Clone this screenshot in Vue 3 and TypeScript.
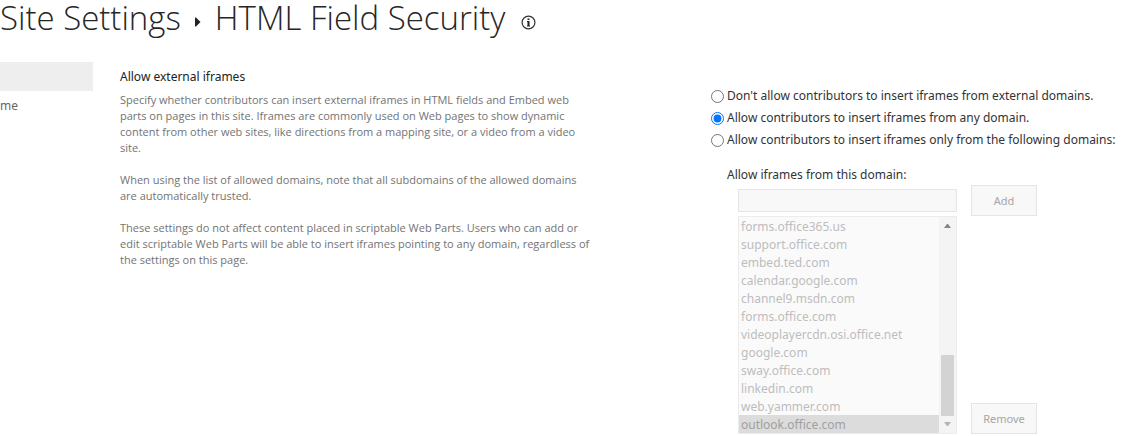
<script setup lang="ts">
import { ref } from 'vue'

type Policy = 'none' | 'any' | 'listed'

const choices: { value: Policy; label: string }[] = [
  { value: 'none', label: "Don't allow contributors to insert iframes from external domains." },
  { value: 'any', label: 'Allow contributors to insert iframes from any domain.' },
  { value: 'listed', label: 'Allow contributors to insert iframes only from the following domains:' },
]

const paragraphs: string[][] = [
  [
    'Specify whether contributors can insert external iframes in HTML fields and Embed web',
    'parts on pages in this site. Iframes are commonly used on Web pages to show dynamic',
    'content from other web sites, like directions from a mapping site, or a video from a video',
    'site.',
  ],
  [
    'When using the list of allowed domains, note that all subdomains of the allowed domains',
    'are automatically trusted.',
  ],
  [
    'These settings do not affect content placed in scriptable Web Parts. Users who can add or',
    'edit scriptable Web Parts will be able to insert iframes pointing to any domain, regardless of',
    'the settings on this page.',
  ],
]

const domains: string[] = [
  'forms.office365.us',
  'support.office.com',
  'embed.ted.com',
  'calendar.google.com',
  'channel9.msdn.com',
  'forms.office.com',
  'videoplayercdn.osi.office.net',
  'google.com',
  'sway.office.com',
  'linkedin.com',
  'web.yammer.com',
  'outlook.office.com',
]

const policy = ref<Policy>('any')
const newDomain = ref('')
const selected = ref('outlook.office.com')
</script>

<template>
  <div class="page">
    <header class="title">
      <h1>Site Settings</h1>
      <svg class="crumb" width="6" height="10" viewBox="0 0 6 10" aria-hidden="true">
        <path d="M0 .5h1L5.5 5 1 9.5H0z" fill="#222" />
      </svg>
      <h1>HTML Field Security</h1>
      <svg class="info" width="15" height="15" viewBox="0 0 15 15" aria-hidden="true">
        <circle cx="7.5" cy="7.5" r="6.4" fill="none" stroke="#333" stroke-width="1.2" />
        <path d="M6.5 3.5h2v1.5h-2zM6 6h2.5v4.5H9v1H6v-1h.5V7H6z" fill="#222" />
      </svg>
    </header>

    <div class="body">
      <nav class="side">
        <div class="current"></div>
        <a href="#">me</a>
      </nav>

      <section class="about">
        <h2>Allow external iframes</h2>
        <p v-for="(lines, i) in paragraphs" :key="i">
          <span v-for="line in lines" :key="line">{{ line }}</span>
        </p>
      </section>

      <form class="settings" @submit.prevent>
        <label v-for="c in choices" :key="c.value" class="choice">
          <input v-model="policy" type="radio" name="policy" :value="c.value" />
          <span>{{ c.label }}</span>
        </label>

        <label class="caption" for="domain">Allow iframes from this domain:</label>
        <div class="editor">
          <div class="fields">
            <input id="domain" v-model="newDomain" class="domain" type="text" disabled />
            <div class="listbox">
              <select v-model="selected" size="12" aria-label="Allowed domains" disabled>
                <option v-for="d in domains" :key="d" :value="d" :class="{ chosen: d === selected }">{{ d }}</option>
              </select>
              <div class="scrollbar" aria-hidden="true">
                <svg width="7" height="4" viewBox="0 0 7 4"><path d="M0 4h7L4 0H3z" fill="#858585" /></svg>
                <div class="thumb"></div>
                <svg width="7" height="4" viewBox="0 0 7 4"><path d="M0 0h7L4 4H3z" fill="#b4b4b4" /></svg>
              </div>
            </div>
          </div>
          <div class="actions">
            <button type="button" disabled>Add</button>
            <button type="button" disabled>Remove</button>
          </div>
        </div>
      </form>
    </div>
  </div>
</template>

<style>
body {
  margin: 0;
  background: #fff;
}
</style>

<style scoped>
.page {
  font-family: "Noto Sans", "Open Sans", sans-serif;
  font-size: 12px;
  color: #333;
}
.title {
  display: flex;
  align-items: center;
  height: 36px;
  white-space: nowrap;
}
h1 {
  margin: 0;
  font-family: "Open Sans", "Noto Sans", sans-serif;
  font-size: 33px;
  line-height: 36px;
  font-weight: 300;
  color: #262626;
}
.crumb {
  margin: 7px 14px 0;
}
.info {
  margin: 8px 0 0 15px;
}
.body {
  display: grid;
  grid-template-columns: 93px minmax(0, 1fr) 414px;
  column-gap: 27px;
  padding-top: 26px;
}
.current {
  height: 29px;
  background: #eee;
}
.side a {
  display: block;
  line-height: 30px;
  color: #666;
  text-decoration: none;
}
h2 {
  margin: 5px 0;
  font-size: 12px;
  line-height: 20px;
  font-weight: 400;
  color: #222;
}
.about p {
  margin: 0 0 16px;
  font-family: "Open Sans", "Noto Sans", sans-serif;
  font-size: 11px;
  line-height: 16px;
  color: #737373;
}
.about span {
  display: block;
  white-space: nowrap;
}
.settings {
  padding-top: 23px;
}
.choice {
  display: flex;
  align-items: center;
  gap: 3px;
  height: 22px;
  line-height: 20px;
  white-space: nowrap;
}
.choice input {
  flex: none;
  width: 13px;
  height: 13px;
  margin: 1px 0 0;
}
.caption {
  display: block;
  margin: 14px 0 0 16px;
  line-height: 20px;
}
.editor {
  display: flex;
  gap: 14px;
  margin: 0 0 0 27px;
}
.fields {
  width: 219px;
  padding-top: 4px;
}
.domain {
  display: block;
  box-sizing: border-box;
  width: 100%;
  height: 23px;
  border: 1px solid #e5e5e5;
  background: #f8f8f8;
  margin-bottom: 4px;
}
.listbox {
  display: flex;
  border: 1px solid #ececec;
  background: #fafafa;
}
select {
  flex: 1;
  min-width: 0;
  height: 216px;
  padding: 0;
  border: 0;
  border-radius: 0;
  background: #fafafa;
  font: inherit;
  color: #bdbdbd;
  opacity: 1;
  overflow: hidden;
  scrollbar-width: none;
}
option {
  box-sizing: border-box;
  height: 18px;
  min-height: 18px;
  padding: 1px 2px 0;
  line-height: 18px;
  color: #bdbdbd;
}
option.chosen {
  background: #dcdcdc linear-gradient(#dcdcdc, #dcdcdc);
  color: #a0a0a0;
}
.scrollbar {
  display: flex;
  flex-direction: column;
  align-items: center;
  box-sizing: border-box;
  width: 17px;
  padding: 7px 0;
  background: #f4f4f4;
}
.thumb {
  width: 13px;
  height: 61px;
  margin: auto 0 6px;
  background: #d3d3d3;
}
.actions {
  display: flex;
  flex-direction: column;
  justify-content: space-between;
}
button {
  width: 66px;
  height: 31px;
  padding: 0;
  border: 1px solid #e5e5e5;
  background: #f8f8f8;
  font: inherit;
  font-size: 11px;
  color: #a6a6a6;
}
</style>
